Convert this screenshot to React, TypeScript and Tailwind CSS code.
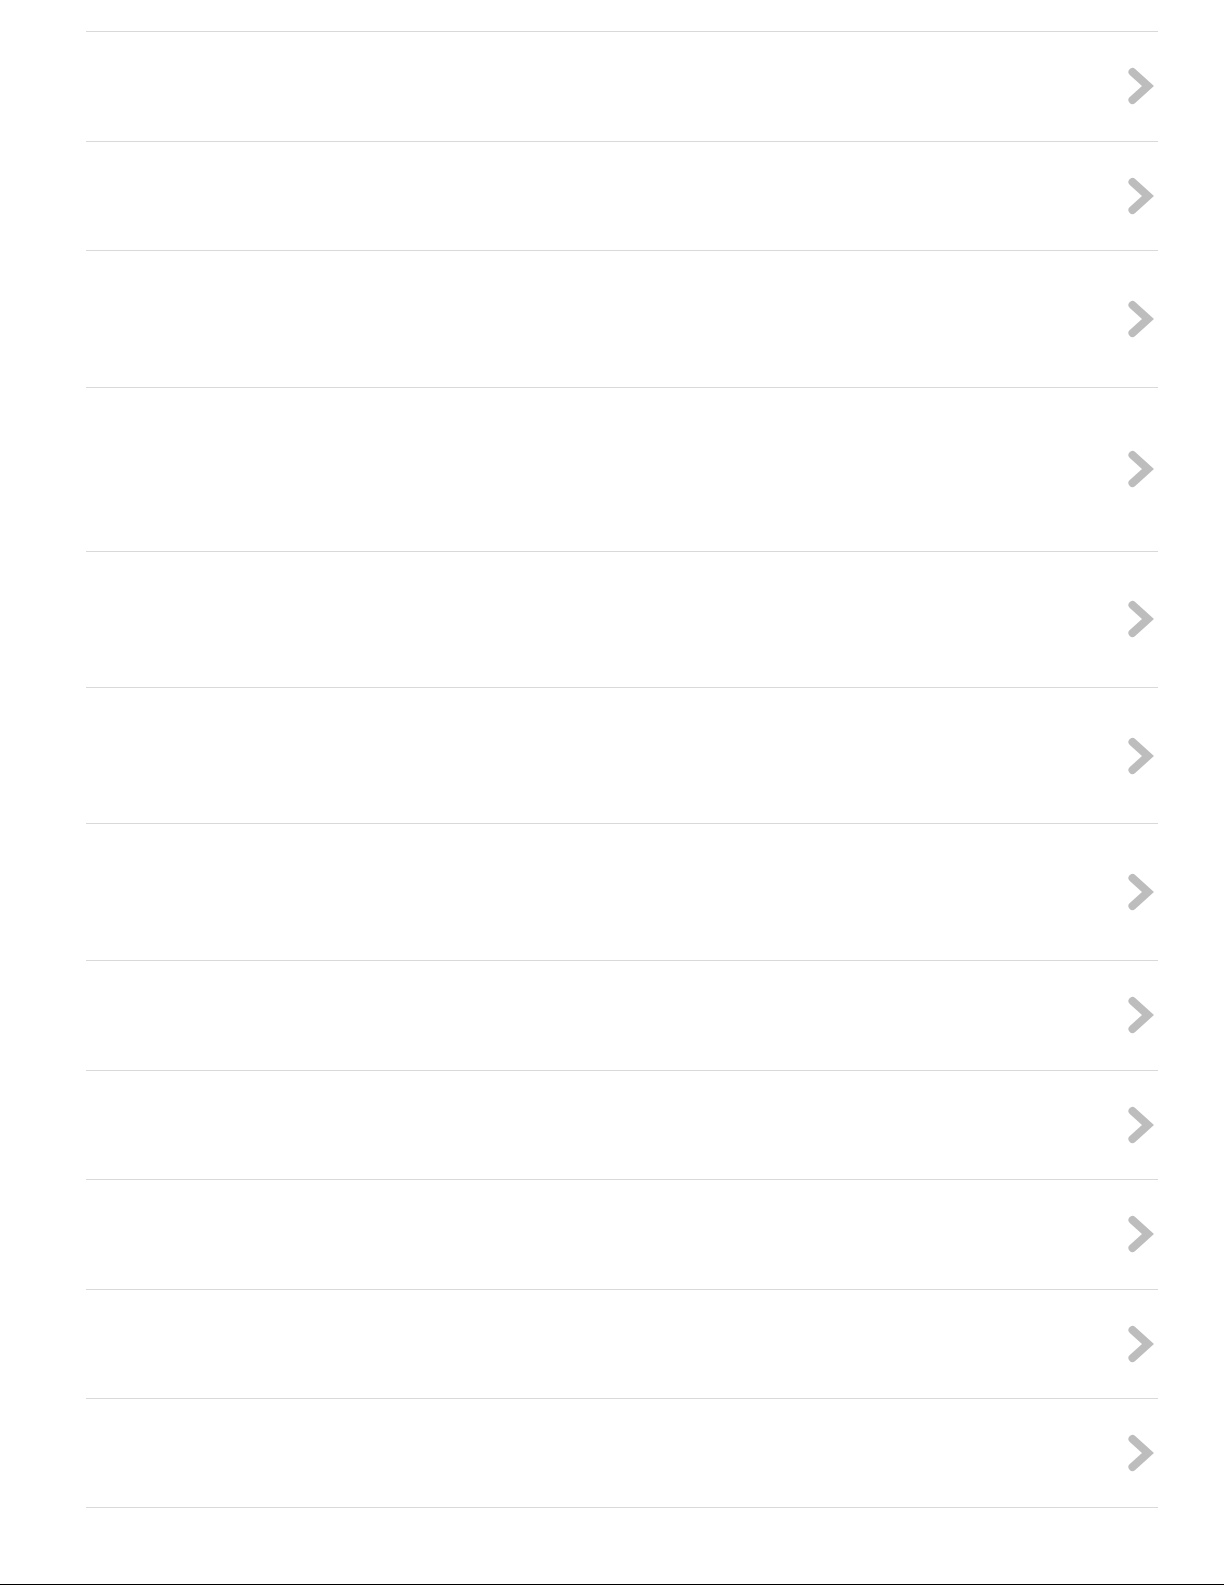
import React from "react";

const rows: number[] = [
  109.6, 109.4, 136.8, 163.8, 136.5, 136.4, 136.8, 109.3, 109.7, 109.3, 109.5, 109.3,
];

function Chevron() {
  return (
    <svg width="30" height="42" viewBox="0 0 30 42" className="block">
      <path
        d="M7.5 7 L23 21 L7.5 35"
        fill="none"
        stroke="#bdbdbd"
        strokeWidth="8"
        strokeLinecap="round"
        strokeLinejoin="miter"
      />
    </svg>
  );
}

export default function App() {
  return (
    <div className="relative w-[1225px] h-[1585px] bg-white overflow-hidden" style={{ fontFamily: '"Liberation Sans", Arial, sans-serif' }}>
      <div className="pt-[31px] pl-[86px]">
        <ul className="w-[1072px] border-t-[1.5px] border-[#d9d9d9]">
          {rows.map((h, i) => (
            <li
              key={i}
              className="flex items-center justify-end border-b-[1.25px] border-[#d9d9d9] pr-[3px]"
              style={{ height: h }}
            >
              <Chevron />
            </li>
          ))}
        </ul>
      </div>
      <div className="absolute left-0 bottom-0 w-[1224px] h-px bg-black" />
    </div>
  );
}
